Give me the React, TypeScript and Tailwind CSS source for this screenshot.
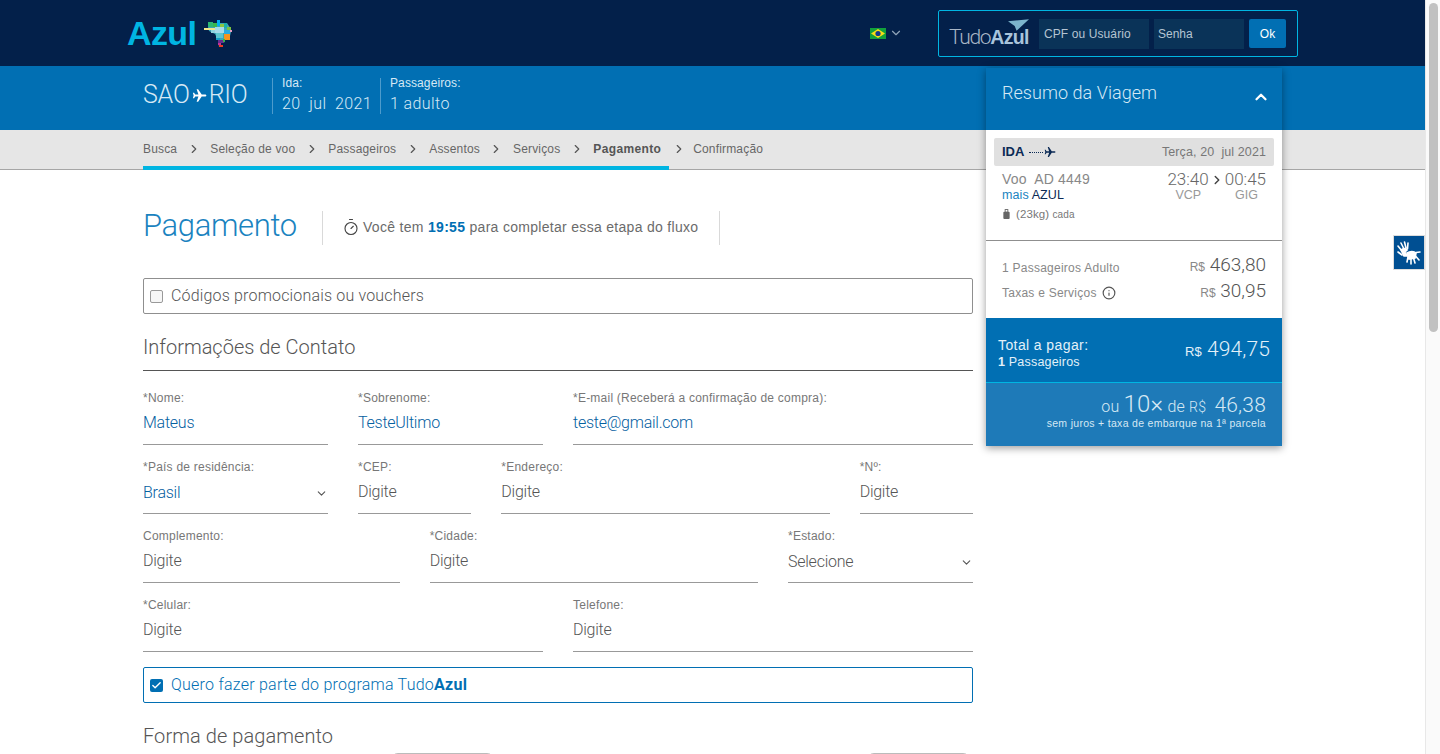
import { Check, ChevronDown, ChevronRight, ChevronUp, Info, Timer } from "lucide-react";

const steps = ["Busca", "Seleção de voo", "Passageiros", "Assentos", "Serviços", "Pagamento"];

function PlaneIcon({ className }: { className?: string }) {
  return (
    <svg viewBox="0 0 24 24" className={className} fill="currentColor">
      <path d="M23 12c0-1-1-1.700-2.300-1.700h-5.200L9.800 2H7.400l2.900 8.300H5.200L3.300 7.700H1.400L2.600 12l-1.200 4.300h1.900l1.900-2.600h5.100L7.400 22h2.400l5.700-8.300h5.200C22 13.700 23 13 23 12z" />
    </svg>
  );
}

function BrazilMark() {
  const blocks = [
    ["#2bb673", 4, 3, 5, 5], ["#39b54a", 9, 4, 4, 4], ["#00aeef", 13, 1, 3, 6], ["#8dc63f", 16, 5, 4, 3],
    ["#1bb0a8", 20, 4, 3, 5], ["#7ac143", 23, 8, 4, 3], ["#f2e58a", 0, 9, 11, 2], ["#a5dbe9", 11, 8, 9, 6],
    ["#29abe2", 20, 11, 6, 4], ["#e6a0c4", 26, 11, 2, 2], ["#8ed3df", 7, 11, 4, 3], ["#5cc6d0", 12, 14, 7, 5],
    ["#f7941d", 20, 15, 6, 6], ["#14a0c8", 12, 19, 4, 2], ["#662d91", 14, 21, 6, 3], ["#39b54a", 19, 20, 2, 3],
    ["#c1309a", 14, 24, 3, 2], ["#ed3c24", 15, 26, 4, 2],
  ] as const;
  return (
    <svg viewBox="0 0 28 28" className="h-[28px] w-[28px]">
      <path d="M4 4H23L27 10V13L25 21H21L20 24H17L17 28H15L14 21L11 15L5 12L4 8Z" fill="#3aa6b8" />
      {blocks.map(([fill, x, y, w, h], i) => (
        <rect key={i} fill={fill} x={x} y={y} width={w} height={h} />
      ))}
    </svg>
  );
}

function Flag() {
  return (
    <svg viewBox="0 0 16 11" className="h-[11px] w-[16px]">
      <rect width="16" height="11" fill="#12a03c" />
      <path d="M8 1 15 5.500 8 10 1 5.500z" fill="#f9dd16" />
      <circle cx="8" cy="5.500" r="2.600" fill="#143a8c" />
    </svg>
  );
}

function Field({
  label,
  value,
  span,
  filled,
  select,
}: {
  label: string;
  value: string;
  span: string;
  filled?: boolean;
  select?: boolean;
}) {
  return (
    <div className={`${span} flex h-[69px] flex-col`}>
      <label className="mt-[2px] h-[15px] text-[12px] leading-[15px] tracking-[0.23px] text-[#777]">{label}</label>
      <div className={`mt-[2px] flex h-[37px] items-center justify-between border-b border-[#999] ${select ? "pb-[4px]" : "pb-[6px]"}`}>
        <span className={`font-['Roboto',sans-serif] text-[16px] font-light tracking-[-0.25px] ${filled ? "text-[#04609f]" : "text-[#555]"}`}>{value}</span>
        {select && <ChevronDown className="h-[13px] w-[13px] text-[#555]" strokeWidth={2} />}
      </div>
    </div>
  );
}

function SummaryPanel() {
  return (
    <aside className="absolute left-[986px] top-[68px] z-10 w-[296px] bg-white shadow-[0_2px_8px_rgba(0,0,0,0.4)]">
      <div className="flex h-[62px] items-start justify-between bg-[#016fb3] pl-[16px] pr-[12px] pt-[11px]">
        <span className="font-['Roboto',sans-serif] text-[18px] font-light tracking-[0.05px] text-[#d6e9f5]">Resumo da Viagem</span>
        <ChevronUp className="mt-[9px] h-[18px] w-[18px] text-white" strokeWidth={3} />
      </div>
      <div className="h-[111px] border-b border-[#8f8f8f] px-[8px] pt-[8px]">
        <div className="flex h-[28px] items-center justify-between rounded-[2px] bg-[#e0e0e0] pl-[8px] pr-[8px]">
          <span className="flex items-center gap-[5px] text-[13px] font-bold text-[#0b2a55]">
            IDA
            <span className="w-[14px] border-t border-dotted border-[#0b2a55]" />
            <PlaneIcon className="-ml-[4px] h-[12px] w-[12px] text-[#0b2a55]" />
          </span>
          <span className="text-[12.500px] tracking-[0.1px] text-[#777]">Terça, 20&nbsp; jul 2021</span>
        </div>
        <div className="mt-[6px] flex justify-between pl-[8px] pr-[8px]">
          <div>
            <div className="text-[14px] leading-[15px] tracking-[0.2px] text-[#888]">Voo&nbsp; AD 4449</div>
            <div className="mt-[1px] text-[12.500px] leading-[15px] tracking-[0.1px]">
              <span className="text-[#1a83bf]">mais</span> <span className="text-[#0b2a55]">AZUL</span>
            </div>
            <div className="mt-[4px] flex items-center gap-[5px] text-[11.500px] leading-[14px] tracking-[0.1px] text-[#777]">
              <svg viewBox="0 0 10 12" className="h-[11px] w-[9px]" fill="#666">
                <rect x="1.500" y="3" width="7" height="8" rx="1" />
                <rect x="3.500" y="0.500" width="3" height="3" fill="none" stroke="#666" />
              </svg>
              <span>
                (23kg) <span className="text-[10px]">cada</span>
              </span>
            </div>
          </div>
          <div className="flex flex-col">
            <div className="flex items-center font-['Roboto',sans-serif] text-[17px] font-light leading-[15px] text-[#666]">
              23:40
              <ChevronRight className="mx-[1px] h-[14px] w-[14px] text-[#444]" strokeWidth={2.500} />
              00:45
            </div>
            <div className="mt-[1px] flex justify-between px-[8px] text-[12.500px] leading-[15px] text-[#999]">
              <span>VCP</span>
              <span>GIG</span>
            </div>
          </div>
        </div>
      </div>
      <div className="h-[77px] px-[16px] pt-[11px] text-[#888]">
        <div className="flex h-[26px] items-center justify-between">
          <span className="pt-[5px] text-[12px] tracking-[0.25px]">1 Passageiros Adulto</span>
          <span className="font-['Roboto',sans-serif] text-[19px] font-light text-[#555]">
            <span className="font-['Liberation_Sans',sans-serif] text-[12px] font-normal text-[#888]">R$</span> 463,80
          </span>
        </div>
        <div className="flex h-[26px] items-center justify-between">
          <span className="flex items-center gap-[5px] pt-[4px] text-[12px] tracking-[0.25px]">
            Taxas e Serviços <Info className="h-[14px] w-[14px] text-[#555]" strokeWidth={2} />
          </span>
          <span className="font-['Roboto',sans-serif] text-[19px] font-light text-[#555]">
            <span className="font-['Liberation_Sans',sans-serif] text-[12px] font-normal text-[#888]">R$</span> 30,95
          </span>
        </div>
      </div>
      <div className="flex h-[65px] items-center justify-between border-b border-[#00b5e2] bg-[#016fb3] pl-[12px] pr-[12px] text-[#e3f1f9]">
        <div className="pt-[6px]">
          <div className="text-[14px] leading-[17px] tracking-[0.4px]">Total a pagar:</div>
          <div className="text-[12.500px] leading-[16px] tracking-[0.2px]">
            <b>1</b> Passageiros
          </div>
        </div>
        <span className="font-['Roboto',sans-serif] text-[21px] font-light tracking-[0.1px]">
          <span className="font-['Liberation_Sans',sans-serif] text-[13px] font-normal">R$</span> 494,75
        </span>
      </div>
      <div className="flex h-[63px] flex-col items-end bg-[#1e7ab8] pr-[16px] pt-[12px] text-[#d5e8f4]">
        <div className="font-['Roboto',sans-serif] text-[16px] font-light leading-[19px] tracking-[0.2px]">
          ou <span className="text-[24px]">10×</span> de <span className="text-[14px]">R$</span>&nbsp;{" "}
          <span className="text-[21px]">46,38</span>
        </div>
        <div className="mt-[0px] text-[10.500px] leading-[12px] tracking-[0.3px]">sem juros + taxa de embarque na 1ª parcela</div>
      </div>
    </aside>
  );
}

export default function App() {
  return (
    <div className="flex h-screen overflow-hidden bg-white font-['Liberation_Sans',sans-serif] text-[#6f6f6f]">
      <div className="relative min-w-0 flex-1 overflow-hidden">
        <header className="flex h-[66px] items-center justify-between bg-[#03204a] pl-[127px] pr-[127px]">
          <div className="flex items-center gap-[8px]">
            <span className="text-[34px] font-bold leading-none tracking-[-0.6px] text-[#00b5e2]">Azul</span>
            <BrazilMark />
          </div>
          <div className="flex items-center">
            <div className="mr-[35px] flex items-center gap-[3px] text-[#8fa3b8]">
              <Flag />
              <ChevronDown className="h-[14px] w-[14px]" />
            </div>
            <div className="flex h-[47px] w-[360px] items-center rounded-[2px] border border-[#00b5e2] pl-[10px] pr-[11px] pt-[1px]">
              <div className="relative mr-[10px] flex w-[80px] items-baseline pt-[8px]">
                <span className="font-['Roboto',sans-serif] text-[21px] font-light leading-none tracking-[-1.300px] text-[#a9b6c6]">Tudo</span>
                <span className="text-[19.500px] font-bold leading-none tracking-[-0.7px] text-[#a9c4dc]">Azul</span>
                <svg viewBox="0 0 22 12" className="absolute -top-[0px] right-0 h-[12px] w-[21px]">
                  <path d="M0 2 22 0 9 12 7 7z" fill="#7cb4cc" />
                </svg>
              </div>
              <div className="flex h-[30px] w-[110px] items-center bg-[#0a3358] pl-[5px] text-[12px] tracking-[0.1px] text-[#b5c4d2]">CPF ou Usuário</div>
              <div className="ml-[5px] flex h-[30px] w-[90px] items-center bg-[#0a3358] pl-[4px] text-[12px] text-[#b5c4d2]">Senha</div>
              <div className="ml-[5px] flex h-[29px] w-[37px] items-center justify-center rounded-[2px] bg-[#016fb3] text-[12px] text-white">Ok</div>
            </div>
          </div>
        </header>

        <div className="flex h-[64px] items-center bg-[#016fb3] pb-[4px] pl-[143px] text-[#d6e9f5]">
          <div className="w-[129px] pb-[2px]">
            <div className="flex items-center font-['Roboto',sans-serif] text-[25px] font-light tracking-[-0.2px]">
              SAO
              <PlaneIcon className="mx-[2px] h-[15px] w-[15px] text-white" />
              RIO
            </div>
          </div>
          <div className="flex h-[36px] w-[108px] flex-col justify-between border-l border-[#4d9bcc] pl-[9px]">
            <span className="-mt-[2px] text-[12px] leading-[14px] tracking-[0.1px]">Ida:</span>
            <span className="font-['Roboto',sans-serif] text-[16px] font-light leading-[20px] tracking-[0.4px]">20&nbsp; jul&nbsp; 2021</span>
          </div>
          <div className="flex h-[36px] flex-col justify-between border-l border-[#4d9bcc] pl-[9px]">
            <span className="-mt-[2px] text-[12px] leading-[14px] tracking-[0.1px]">Passageiros:</span>
            <span className="font-['Roboto',sans-serif] text-[16px] font-light leading-[20px] tracking-[0.4px]">1 adulto</span>
          </div>
        </div>

        <nav className="flex h-[40px] border-b border-[#a6a6a6] bg-[#e6e6e6] pl-[143px] text-[12px] tracking-[0.17px] text-[#666]">
          <div className="flex h-[40px] border-b-[4px] border-[#00b5e2] pr-[8px] pt-[11px]">
            {steps.map((step, i) => (
              <span key={step} className="flex h-[16px] items-center">
                <span className={step === "Pagamento" ? "font-bold tracking-[0.35px] text-[#555]" : ""}>{step}</span>
                {i < 5 && <ChevronRight className="mx-[9.500px] h-[14px] w-[14px] text-[#555]" strokeWidth={2} />}
              </span>
            ))}
          </div>
          <div className="flex h-[27px] items-center pl-[3px] pt-[11px]">
            <ChevronRight className="mr-[7px] h-[14px] w-[14px] text-[#555]" strokeWidth={2} />
            Confirmação
          </div>
        </nav>

        <main className="w-[973px] pl-[143px]">
          <div className="mt-[41px] flex h-[34px] items-center">
            <h1 className="-mt-[3px] w-[179px] font-['Roboto',sans-serif] text-[31px] font-light tracking-[-0.35px] text-[#1a83bf]">Pagamento</h1>
            <div className="flex h-[34px] w-[398px] items-center gap-[3px] border-x border-[#d9d9d9] pb-[2px] pl-[19px] text-[14px] tracking-[0.3px] text-[#6b6b6b]">
              <Timer className="h-[18px] w-[18px] text-[#444]" strokeWidth={1.500} />
              <span>
                Você tem <b className="text-[#016fb3]">19:55</b> para completar essa etapa do fluxo
              </span>
            </div>
          </div>

          <div className="mt-[33px] flex h-[36px] items-center rounded-[2px] border border-[#8f8f8f] pl-[6px]">
            <span className="h-[13px] w-[13px] rounded-[2px] border border-[#999] bg-[#f6f6f6]" />
            <span className="-mt-[1px] ml-[8px] font-['Roboto',sans-serif] text-[16px] font-light tracking-[0.17px] text-[#555]">Códigos promocionais ou vouchers</span>
          </div>

          <h2 className="mt-[18px] h-[39px] border-b border-[#555] font-['Roboto',sans-serif] text-[20px] font-light text-[#555]">
            Informações de Contato
          </h2>

          <div className="mt-[18px] grid grid-cols-12 gap-x-[30px]">
            <Field span="col-span-3" label="*Nome:" value="Mateus" filled />
            <Field span="col-span-3" label="*Sobrenome:" value="TesteUltimo" filled />
            <Field span="col-span-6" label="*E-mail (Receberá a confirmação de compra):" value="teste@gmail.com" filled />
            <Field span="col-span-3" label="*País de residência:" value="Brasil" filled select />
            <Field span="col-span-2" label="*CEP:" value="Digite" />
            <Field span="col-span-5" label="*Endereço:" value="Digite" />
            <Field span="col-span-2" label="*Nº:" value="Digite" />
            <Field span="col-span-4" label="Complemento:" value="Digite" />
            <Field span="col-span-5" label="*Cidade:" value="Digite" />
            <Field span="col-span-3" label="*Estado:" value="Selecione" select />
            <Field span="col-span-6" label="*Celular:" value="Digite" />
            <Field span="col-span-6" label="Telefone:" value="Digite" />
          </div>

          <div className="mt-[2px] flex h-[36px] items-center rounded-[2px] border border-[#016fb3] pl-[6px]">
            <span className="flex h-[13px] w-[13px] items-center justify-center rounded-[2px] bg-[#016fb3]">
              <Check className="h-[11px] w-[11px] text-white" strokeWidth={3} />
            </span>
            <span className="-mt-[1px] ml-[8px] font-['Roboto',sans-serif] text-[16px] font-light tracking-[0.24px] text-[#016fb3]">
              Quero fazer parte do programa Tudo<b className="font-bold">Azul</b>
            </span>
          </div>

          <h2 className="mt-[18px] font-['Roboto',sans-serif] text-[20px] font-light tracking-[0.07px] text-[#555]">Forma de pagamento</h2>
          <div className="mt-[2px] flex">
            <div className="ml-[247px] h-[40px] w-[105px] rounded-[8px] border border-[#bbb]" />
            <div className="ml-[371px] h-[40px] w-[105px] rounded-[8px] border border-[#bbb]" />
          </div>
        </main>

        <SummaryPanel />

        <button className="absolute left-[1393px] top-[235px] flex h-[35px] w-[32px] items-center justify-center border border-[#ddd] bg-[#004f92]">
          <svg viewBox="0 0 24 24" className="h-[24px] w-[24px]" fill="none" stroke="white" strokeWidth="1.600" strokeLinecap="round">
            <path d="M1 5l4 5M4 2l3 6M7.500 1l1.500 6M11 2l-.5 6M1 11l4 3" />
            <path fill="white" d="M4 9c2-2 5-2 6 0l-2 2 2 4-3 0z" />
            <path fill="white" d="M10 12c3-2 7-2 9 0l-1 5-6 1z" />
            <path d="M11 16l-1 5M14 17l0 6M16.500 17l1.500 5M18.500 15l3.500 4M19 11.500l4-.5" />
          </svg>
        </button>
      </div>

      <div className="flex w-[15px] shrink-0 justify-center border-l border-[#e8e8e8] bg-[#fafafa] pt-[3px]">
        <div className="h-[329px] w-[9px] rounded-full bg-[#c1c1c1]" />
      </div>
    </div>
  );
}
